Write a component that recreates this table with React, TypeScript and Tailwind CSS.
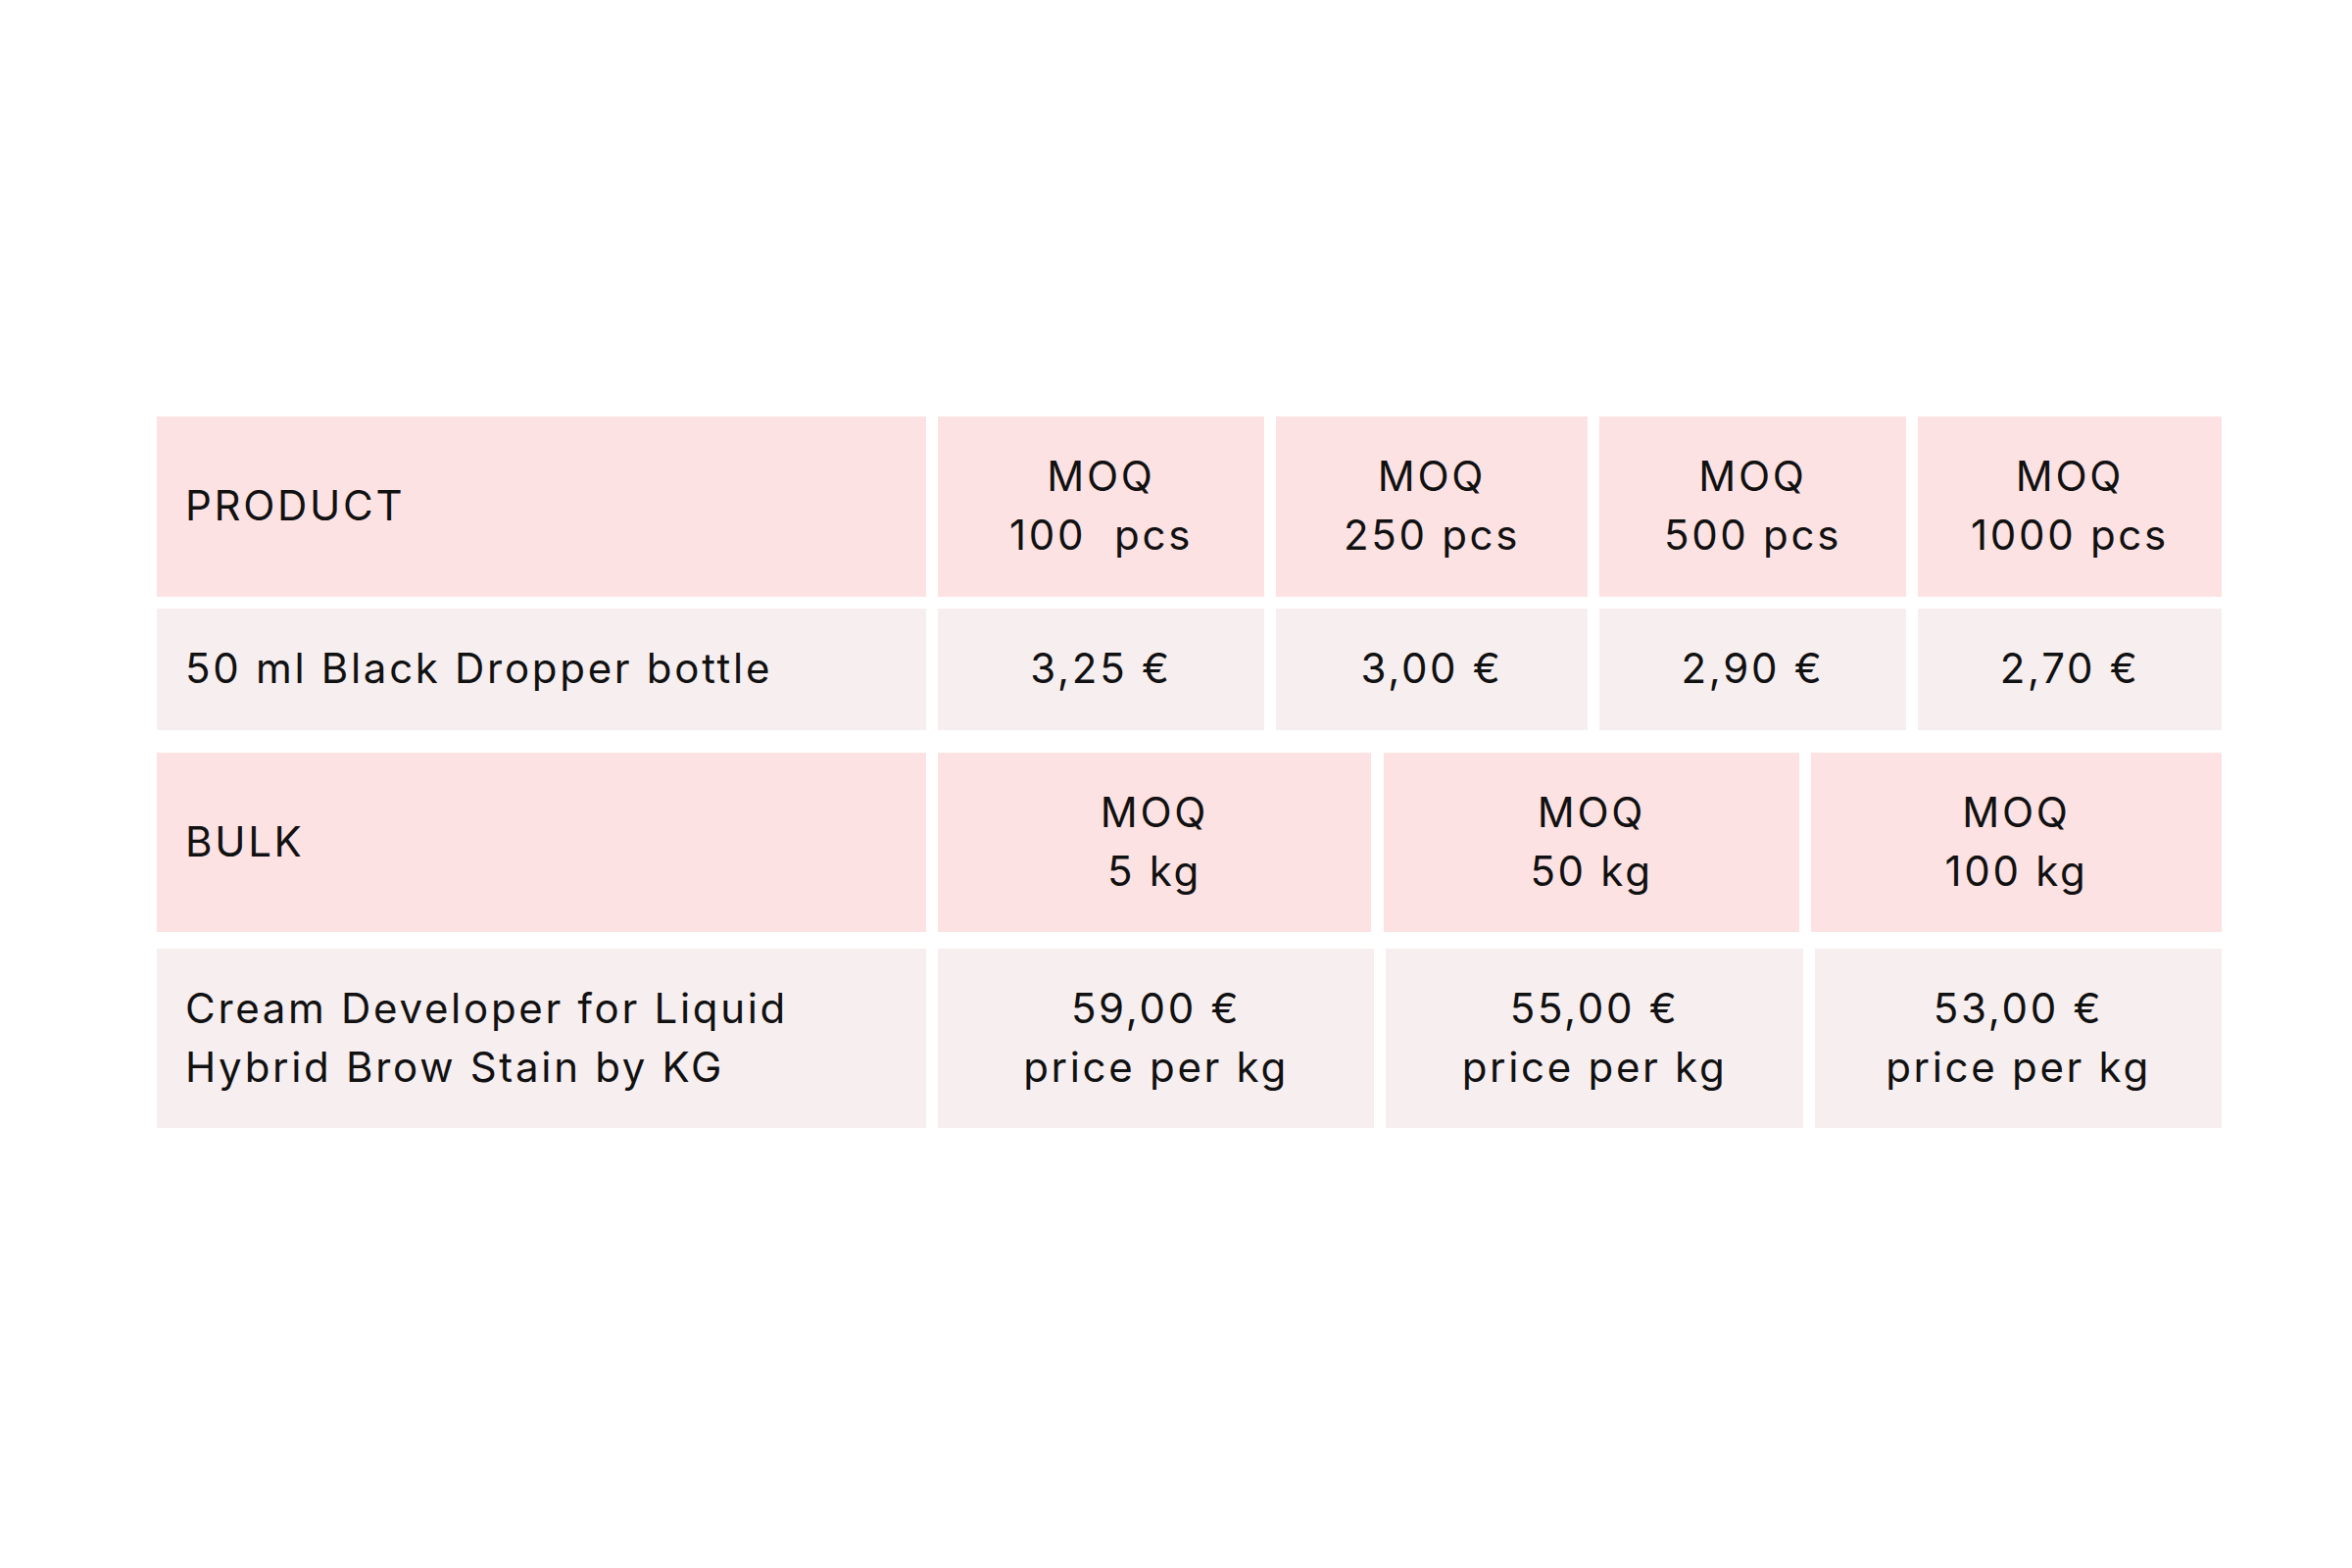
import React from "react";

const H = "bg-[#fde2e3]";
const B = "bg-[#f7eeef]";

function Cell({ w, bg, left, children }: { w: string; bg: string; left?: boolean; children: React.ReactNode }) {
  return (
    <div
      className={`${w} ${bg} flex h-full items-center ${left ? "justify-start pl-[29px] text-left" : "justify-center text-center"}`}
    >
      <div className="leading-[60px] -mt-[2px]">{children}</div>
    </div>
  );
}

export default function App() {
  return (
    <div
      className="w-[2400px] h-[1600px] bg-white pt-[425px] pl-[160px] text-[#111111] text-[42px] tracking-[2.7px]"
      style={{ fontFamily: "Inter, 'Open Sans', sans-serif" }}
    >
      <div className="flex flex-col w-[2107px]">
        <div className="flex h-[184px] gap-[12px]">
          <Cell w="w-[785px]" bg={H} left>PRODUCT</Cell>
          <Cell w="w-[333px]" bg={H}>MOQ<br />100&nbsp; pcs</Cell>
          <Cell w="w-[318px]" bg={H}>MOQ<br />250 pcs</Cell>
          <Cell w="w-[313px]" bg={H}>MOQ<br />500 pcs</Cell>
          <Cell w="w-[310px]" bg={H}>MOQ<br />1000 pcs</Cell>
        </div>
        <div className="flex h-[124px] gap-[12px] mt-[12px]">
          <Cell w="w-[785px]" bg={B} left>50 ml Black Dropper bottle</Cell>
          <Cell w="w-[333px]" bg={B}>3,25 €</Cell>
          <Cell w="w-[318px]" bg={B}>3,00 €</Cell>
          <Cell w="w-[313px]" bg={B}>2,90 €</Cell>
          <Cell w="w-[310px]" bg={B}>2,70 €</Cell>
        </div>
        <div className="flex h-[183px] mt-[23px]">
          <Cell w="w-[785px]" bg={H} left>BULK</Cell>
          <div className="w-[12px]" />
          <Cell w="w-[442px]" bg={H}>MOQ<br />5 kg</Cell>
          <div className="w-[13px]" />
          <Cell w="w-[424px]" bg={H}>MOQ<br />50 kg</Cell>
          <div className="w-[12px]" />
          <Cell w="w-[419px]" bg={H}>MOQ<br />100 kg</Cell>
        </div>
        <div className="flex h-[183px] gap-[12px] mt-[17px]">
          <Cell w="w-[785px]" bg={B} left>Cream Developer for Liquid<br />Hybrid Brow Stain by KG</Cell>
          <Cell w="w-[445px]" bg={B}>59,00 €<br />price per kg</Cell>
          <Cell w="w-[426px]" bg={B}>55,00 €<br />price per kg</Cell>
          <Cell w="w-[415px]" bg={B}>53,00 €<br />price per kg</Cell>
        </div>
      </div>
    </div>
  );
}
